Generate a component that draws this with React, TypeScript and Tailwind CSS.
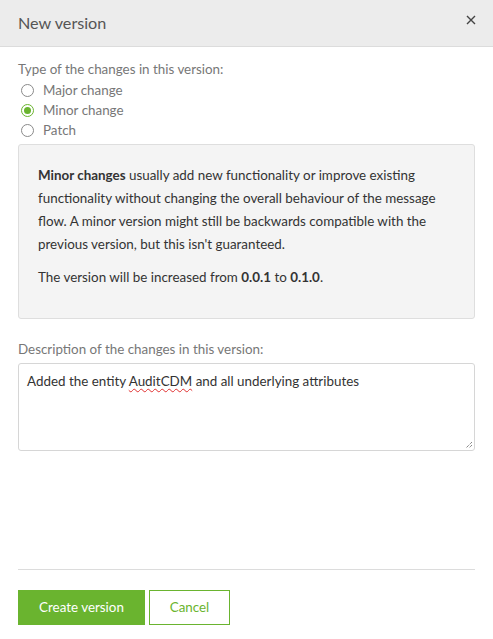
import React from "react";

function Radio({ checked, label }: { checked?: boolean; label: string }) {
  return (
    <label className="flex items-center h-5 gap-[9px]">
      <span
        className={
          checked
            ? "w-[13px] h-[13px] rounded-full border border-[#6ab42f] flex items-center justify-center ml-[3px]"
            : "w-[13px] h-[13px] rounded-full border border-[#8a8a8a] ml-[3px]"
        }
      >
        {checked && <span className="w-[7px] h-[7px] rounded-full bg-[#6ab42f]" />}
      </span>
      <span className="text-[13.4px] text-[#777]">{label}</span>
    </label>
  );
}

export default function App() {
  return (
    <div
      className="w-[493px] h-[639px] bg-white flex flex-col"
      style={{ fontFamily: '"Lato", "Open Sans", sans-serif' }}
    >
      <div className="h-[47px] bg-[#ececec] border-b border-[#dcdcdc] flex items-center justify-between pl-[18px] pr-[17px] shrink-0">
        <span className="text-[16.2px] text-[#555]">New version</span>
        <svg width="10" height="10" viewBox="0 0 10 10" className="-mt-[6px]">
          <path d="M1 1L9 9M9 1L1 9" stroke="#444" strokeWidth="1.4" />
        </svg>
      </div>
      <div className="flex flex-col px-[18px] pt-[12px]">
        <div className="text-[13.4px] text-[#777] h-5 leading-5">Type of the changes in this version:</div>
        <div className="flex flex-col mt-[1px]">
          <Radio label="Major change" />
          <Radio label="Minor change" checked />
          <Radio label="Patch" />
        </div>
        <div className="mt-[4px] bg-[#f4f4f4] border border-[#dedede] rounded-[3px] h-[175px] px-[19px] pt-[19px] text-[13.4px] text-[#333]">
          <p className="leading-[23px]">
            <b>Minor changes</b> usually add new functionality or improve existing
            <br />
            functionality without changing the overall behaviour of the message
            <br />
            flow. A minor version might still be backwards compatible with the
            <br />
            previous version, but this isn't guaranteed.
          </p>
          <p className="leading-[23px] mt-[10px]">
            The version will be increased from <b>0.0.1</b> to <b>0.1.0</b>.
          </p>
        </div>
        <div className="mt-[20px] text-[13.4px] text-[#777] h-5 leading-5">
          Description of the changes in this version:
        </div>
        <div className="relative mt-[4px] h-[88px] border border-[#d6d6d6] rounded-[3px] px-[8px] py-[7px] text-[13.4px] text-[#333]">
          Added the entity{" "}
          <span className="underline decoration-wavy decoration-[#e03030] decoration-1 underline-offset-2">
            AuditCDM
          </span>{" "}
          and all underlying attributes
          <svg width="9" height="9" viewBox="0 0 9 9" className="absolute right-[1px] bottom-[1px]">
            <path d="M8 2L2 8M8 5L5 8" stroke="#555" strokeWidth="1" strokeDasharray="1 1" />
          </svg>
        </div>
      </div>
      <div className="flex-1" />
      <div className="mx-[18px] border-t border-[#dcdcdc]" />
      <div className="flex gap-[4px] px-[18px] pt-[20px] pb-[14px]">
        <button className="w-[127px] h-[35px] bg-[#6ab42f] text-white text-[13.4px]">Create version</button>
        <button className="w-[81px] h-[35px] border border-[#6ab42f] text-[#6ab42f] text-[13.4px] bg-white">
          Cancel
        </button>
      </div>
    </div>
  );
}
